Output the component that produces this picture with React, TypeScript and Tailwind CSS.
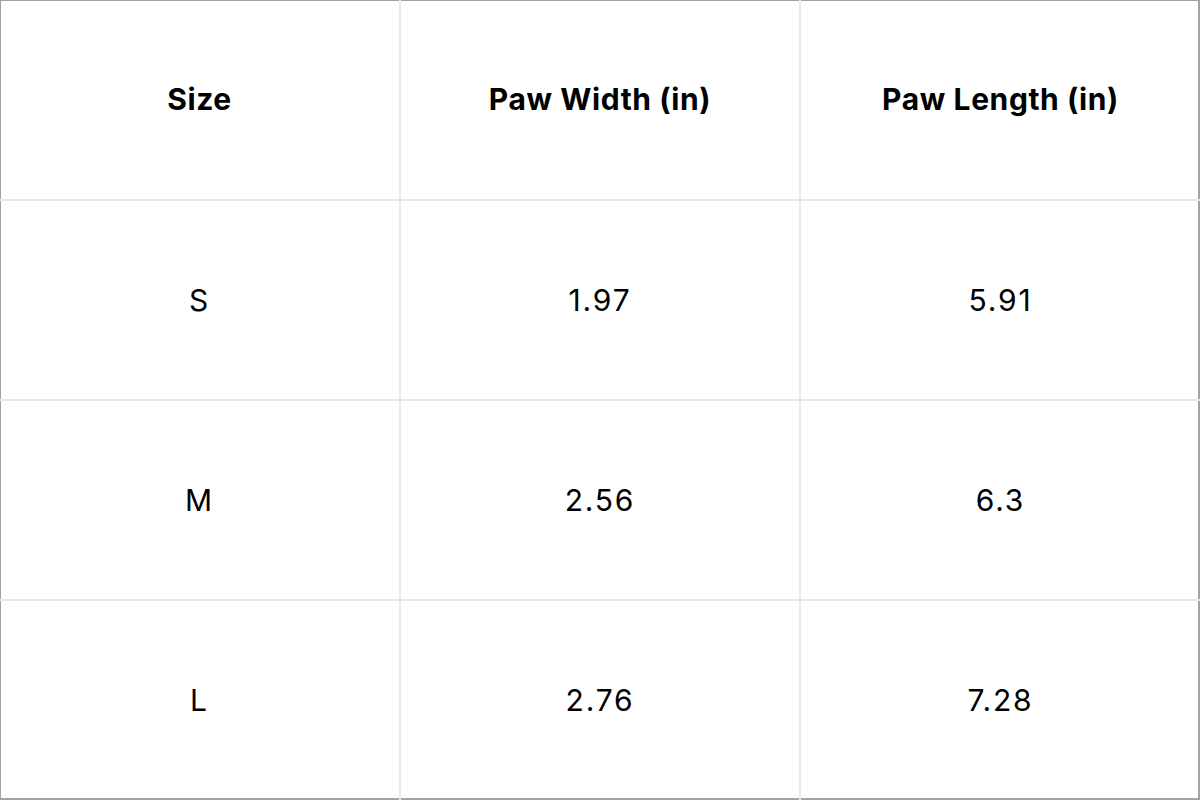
const headers = ['Size', 'Paw Width (in)', 'Paw Length (in)']

const rows = [
  ['S', '1.97', '5.91'],
  ['M', '2.56', '6.3'],
  ['L', '2.76', '7.28'],
]

export default function App() {
  return (
    <div
      className="grid grid-cols-[401px_400px_399px] grid-rows-[201px_200px_200px_199px] w-[1200px] h-[800px] bg-white text-black shadow-[inset_1px_1px_0_#a3a3a3,inset_-2px_-2px_0_#a3a3a3]"
      style={{ fontFamily: 'Inter, "Open Sans", sans-serif' }}
    >
      {headers.map((h, i) => (
        <div
          key={h}
          className={`flex items-center justify-center text-[30px] font-bold tracking-[0.02em] border-[#e8e8e8] border-b-2 ${i < 2 ? 'border-r-2' : ''}`}
        >
          {h}
        </div>
      ))}
      {rows.map((r, ri) =>
        r.map((c, ci) => (
          <div
            key={`${ri}-${ci}`}
            className={`flex items-center justify-center text-[30px] tracking-[0.06em] border-[#e8e8e8] ${ri < 2 ? 'border-b-2' : ''} ${ci < 2 ? 'border-r-2' : ''}`}
          >
            {c}
          </div>
        ))
      )}
    </div>
  )
}
